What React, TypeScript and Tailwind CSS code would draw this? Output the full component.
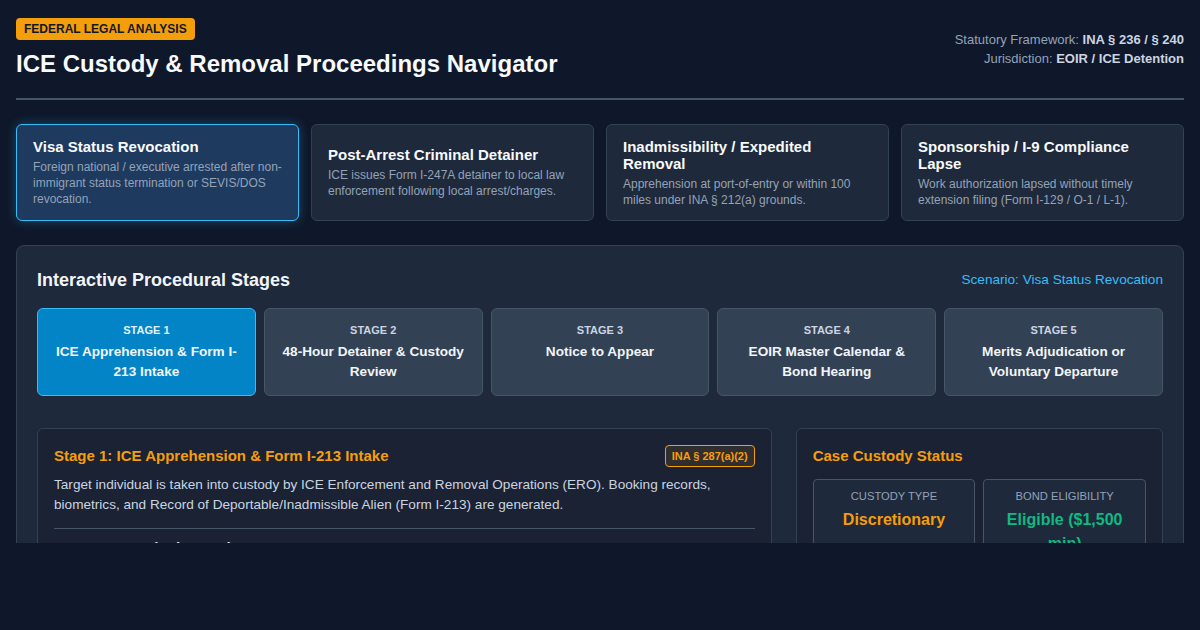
import { useState } from "react"

const scenarios = [
  {
    title: "Visa Status Revocation",
    desc: "Foreign national / executive arrested after non-immigrant status termination or SEVIS/DOS revocation.",
  },
  {
    title: "Post-Arrest Criminal Detainer",
    desc: "ICE issues Form I-247A detainer to local law enforcement following local arrest/charges.",
  },
  {
    title: "Inadmissibility / Expedited Removal",
    desc: "Apprehension at port-of-entry or within 100 miles under INA § 212(a) grounds.",
  },
  {
    title: "Sponsorship / I-9 Compliance Lapse",
    desc: "Work authorization lapsed without timely extension filing (Form I-129 / O-1 / L-1).",
  },
]

const stages = [
  "ICE Apprehension & Form I-213 Intake",
  "48-Hour Detainer & Custody Review",
  "Notice to Appear",
  "EOIR Master Calendar & Bond Hearing",
  "Merits Adjudication or Voluntary Departure",
]

export default function App() {
  const [scenario, setScenario] = useState(0)
  const [stage, setStage] = useState(0)

  return (
    <div className="min-h-[630px] bg-[#0f172a] text-white" style={{ fontFamily: '"Liberation Sans", Arial, sans-serif' }}>
      <div className="h-[543px] overflow-hidden px-4 pt-[18px]">
        {/* Header */}
        <div className="flex items-start justify-between border-b-2 border-[#475569] pb-[19px]">
          <div>
            <span className="flex h-[22px] w-fit items-center rounded bg-[#f59e0b] px-2 text-[12px] font-bold text-[#111827]">
              FEDERAL LEGAL ANALYSIS
            </span>
            <h1 className="mt-[9px] text-[24px] font-bold leading-[30px] text-[#f8fafc]">
              ICE Custody &amp; Removal Proceedings Navigator
            </h1>
          </div>
          <div className="pt-[12px] text-right text-[13px] leading-[19px] text-[#94a3b8]">
            <div>
              Statutory Framework: <span className="font-bold text-[#cbd5e1]">INA § 236 / § 240</span>
            </div>
            <div>
              Jurisdiction: <span className="font-bold text-[#cbd5e1]">EOIR / ICE Detention</span>
            </div>
          </div>
        </div>

        {/* Scenario cards */}
        <div className="mt-6 grid grid-cols-4 gap-3">
          {scenarios.map((s, i) => (
            <button
              key={s.title}
              type="button"
              onClick={() => setScenario(i)}
              className={
                i === scenario
                  ? "flex h-[97px] flex-col justify-center rounded-md border border-[#38bdf8] bg-[#1e3a5f] px-4 text-left shadow-[0_0_12px_rgba(56,189,248,0.3)]"
                  : "flex h-[97px] flex-col justify-center rounded-md border border-[#334155] bg-[#1e293b] px-4 text-left"
              }
            >
              <div className="text-[15px] font-bold leading-[17px] text-[#f8fafc]">{s.title}</div>
              <div className="mt-[4px] text-[12px] leading-4 text-[#94a3b8]">{s.desc}</div>
            </button>
          ))}
        </div>

        {/* Stage panel */}
        <div className="mt-6 rounded-lg border border-[#334155] bg-[#1e293b] px-5 pt-[22px] pb-6">
          <div className="flex items-center justify-between">
            <h2 className="text-[18px] font-bold leading-6 text-[#f1f5f9]">Interactive Procedural Stages</h2>
            <span className="text-[13.6px] text-[#38bdf8]">Scenario: {scenarios[scenario].title}</span>
          </div>

          <div className="mt-[16px] grid grid-cols-5 gap-2">
            {stages.map((t, i) => (
              <button
                key={t}
                type="button"
                onClick={() => setStage(i)}
                className={
                  i === stage
                    ? "flex h-[88px] flex-col items-center justify-start rounded-md border border-[#38bdf8] bg-[#0284c7] px-4 pt-[13px] text-center"
                    : "flex h-[88px] flex-col items-center justify-start rounded-md border border-[#475569] bg-[#334155] px-4 pt-[13px] text-center"
                }
              >
                <div className={i === stage ? "text-[11px] font-bold leading-4 text-[#e0f2fe]" : "text-[11px] font-bold leading-4 text-[#cbd5e1]"}>
                  STAGE {i + 1}
                </div>
                <div className="mt-[4px] text-[13.6px] font-bold leading-5 text-[#f1f5f9]">{t}</div>
              </button>
            ))}
          </div>

          <div className="mt-8 grid grid-cols-[2fr_1fr] gap-6">
            {/* Stage detail */}
            <div className="rounded-md border border-[#334155] bg-[#1a2233] px-4 pt-4 pb-4">
              <div className="flex items-start justify-between">
                <h3 className="pt-[1px] text-[15px] font-bold leading-5 text-[#f59e0b]">
                  Stage {stage + 1}: {stages[stage]}
                </h3>
                <span className="flex h-[22px] items-center rounded border border-[#f59e0b] bg-[#f59e0b]/10 px-[6px] text-[11px] font-bold text-[#f59e0b]">
                  INA § 287(a)(2)
                </span>
              </div>
              <p className="mt-[8px] text-[13.6px] leading-5 text-[#cbd5e1]">
                Target individual is taken into custody by ICE Enforcement and Removal Operations (ERO). Booking records,
                biometrics, and Record of Deportable/Inadmissible Alien (Form I-213) are generated.
              </p>
              <div className="mt-[13px] border-t border-[#475569] pt-[9px]">
                <div className="text-[14px] font-bold leading-5 text-[#e2e8f0]">Statutory Standard &amp; Burden</div>
                <p className="mt-1 text-[13px] leading-5 text-[#94a3b8]">
                  Officers may arrest without warrant where there is reason to believe the individual is removable and likely
                  to escape before a warrant can be obtained.
                </p>
              </div>
            </div>

            {/* Custody status */}
            <div className="rounded-md border border-[#334155] bg-[#1a2233] px-4 pt-4 pb-4">
              <h3 className="pt-[1px] text-[15px] font-bold leading-5 text-[#f59e0b]">Case Custody Status</h3>
              <div className="mt-[13px] grid grid-cols-2 gap-2">
                <div className="rounded border border-[#475569] bg-[#1e293b] px-2 pt-[8px] pb-3 text-center">
                  <div className="text-[11.2px] uppercase leading-4 text-[#94a3b8]">Custody Type</div>
                  <div className="mt-[4px] text-[16px] font-bold leading-6 text-[#f59e0b]">Discretionary</div>
                </div>
                <div className="rounded border border-[#475569] bg-[#1e293b] px-2 pt-[8px] pb-3 text-center">
                  <div className="text-[11.2px] uppercase leading-4 text-[#94a3b8]">Bond Eligibility</div>
                  <div className="mt-[4px] text-[16px] font-bold leading-6 text-[#10b981]">Eligible ($1,500 min)</div>
                </div>
              </div>
            </div>
          </div>
        </div>
      </div>
    </div>
  )
}
